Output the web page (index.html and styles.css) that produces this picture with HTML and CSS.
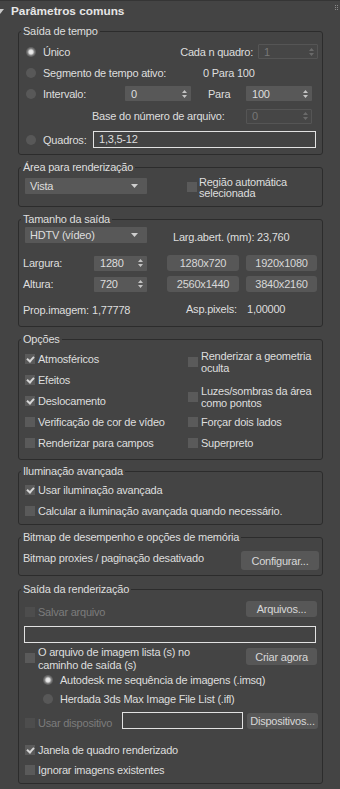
FILE: index.html
```html
<!DOCTYPE html>
<html lang="pt">
<head>
<meta charset="utf-8">
<title>Parâmetros comuns</title>
<link rel="stylesheet" href="styles.css">
</head>
<body>
<div class="panel">
  <div class="head">
    <svg class="tri" width="8" height="5" viewBox="0 0 8 5"><path d="M0 0H8L4 5Z"/></svg>
    <span class="title">Parâmetros comuns</span>
    <svg class="grip" width="4" height="7" viewBox="0 0 4 7"><rect x="0" y="0" width="1" height="1"/><rect x="2" y="0" width="1" height="1"/><rect x="0" y="2" width="1" height="1"/><rect x="2" y="2" width="1" height="1"/><rect x="0" y="4" width="1" height="1"/><rect x="2" y="4" width="1" height="1"/></svg>
  </div>

  <section class="group g1">
    <div class="legend">Saída de tempo</div>
    <div class="row t1">
      <span class="radio on"></span><span class="rtext">Único</span>
      <span class="cada">Cada n quadro:</span>
      <span class="spin dis w60"><span>1</span><svg class="ud" width="5" height="8" viewBox="0 0 5 8"><path d="M2.5 0L5 3H0Z M2.5 8L5 5H0Z"/></svg></span>
    </div>
    <div class="row t2">
      <span class="radio"></span><span class="rtext seg">Segmento de tempo ativo:</span>
      <span>0 Para 100</span>
    </div>
    <div class="row t3">
      <span class="radio"></span><span class="rtext intv">Intervalo:</span>
      <span class="spin w66"><span>0</span><svg class="ud" width="5" height="8" viewBox="0 0 5 8"><path d="M2.5 0L5 3H0Z M2.5 8L5 5H0Z"/></svg></span>
      <span class="para">Para</span>
      <span class="spin w66"><span>100</span><svg class="ud" width="5" height="8" viewBox="0 0 5 8"><path d="M2.5 0L5 3H0Z M2.5 8L5 5H0Z"/></svg></span>
    </div>
    <div class="row t4">
      <span class="base">Base do número de arquivo:</span>
      <span class="spin dis w66"><span>0</span><svg class="ud" width="5" height="8" viewBox="0 0 5 8"><path d="M2.5 0L5 3H0Z M2.5 8L5 5H0Z"/></svg></span>
    </div>
    <div class="row t5">
      <span class="radio"></span><span class="rtext quad">Quadros:</span>
      <span class="field w223">1,3,5-12</span>
    </div>
  </section>

  <section class="group g2">
    <div class="legend">Área para renderização</div>
    <div class="row top a1">
      <span class="drop"><span>Vista</span><svg class="dd" width="7" height="4" viewBox="0 0 7 4"><path d="M0 0H7L3.5 4Z"/></svg></span>
      <span class="cbox auto"></span>
      <span class="two">Região automática<br>selecionada</span>
    </div>
  </section>

  <section class="group g3">
    <div class="legend">Tamanho da saída</div>
    <div class="row top s1">
      <span class="drop"><span>HDTV (vídeo)</span><svg class="dd" width="7" height="4" viewBox="0 0 7 4"><path d="M0 0H7L3.5 4Z"/></svg></span>
      <span class="larg">Larg.abert. (mm): 23,760</span>
    </div>
    <div class="row s2">
      <span class="dim">Largura:</span>
      <span class="spin w53"><span>1280</span><svg class="ud" width="5" height="8" viewBox="0 0 5 8"><path d="M2.5 0L5 3H0Z M2.5 8L5 5H0Z"/></svg></span>
      <span class="btn b1">1280x720</span>
      <span class="btn b2">1920x1080</span>
    </div>
    <div class="row s3">
      <span class="dim">Altura:</span>
      <span class="spin w53"><span>720</span><svg class="ud" width="5" height="8" viewBox="0 0 5 8"><path d="M2.5 0L5 3H0Z M2.5 8L5 5H0Z"/></svg></span>
      <span class="btn b1">2560x1440</span>
      <span class="btn b2">3840x2160</span>
    </div>
    <div class="row s4">
      <span class="prop">Prop.imagem:</span>
      <span class="propv">1,77778</span>
      <span class="asp">Asp.pixels:</span>
      <span class="aspv">1,00000</span>
    </div>
  </section>

  <section class="group g4">
    <div class="legend">Opções</div>
    <div class="cols">
      <div class="col left">
        <label class="chk"><span class="cbox on"></span><span>Atmosféricos</span></label>
        <label class="chk"><span class="cbox on"></span><span>Efeitos</span></label>
        <label class="chk"><span class="cbox on"></span><span>Deslocamento</span></label>
        <label class="chk"><span class="cbox"></span><span>Verificação de cor de vídeo</span></label>
        <label class="chk"><span class="cbox"></span><span>Renderizar para campos</span></label>
      </div>
      <div class="col right">
        <label class="chk o1"><span class="cbox"></span><span class="ml">Renderizar a geometria<br>oculta</span></label>
        <label class="chk o2"><span class="cbox"></span><span class="ml">Luzes/sombras da área<br>como pontos</span></label>
        <label class="chk o3"><span class="cbox"></span><span>Forçar dois lados</span></label>
        <label class="chk o4"><span class="cbox"></span><span>Superpreto</span></label>
      </div>
    </div>
  </section>

  <section class="group g5">
    <div class="legend">Iluminação avançada</div>
    <div class="col list">
      <label class="chk"><span class="cbox on"></span><span>Usar iluminação avançada</span></label>
      <label class="chk"><span class="cbox"></span><span>Calcular a iluminação avançada quando necessário.</span></label>
    </div>
  </section>

  <section class="group g6">
    <div class="legend">Bitmap de desempenho e opções de memória</div>
    <div class="row top m1">
      <span class="proxy">Bitmap proxies / paginação desativado</span>
      <span class="btn cfg">Configurar...</span>
    </div>
  </section>

  <section class="group g7">
    <div class="legend">Saída da renderização</div>
    <div class="row top o-r1">
      <span class="cbox dis"></span>
      <span class="ctext dim-t">Salvar arquivo</span>
      <span class="btn arq">Arquivos...</span>
    </div>
    <div class="field path"></div>
    <div class="row top o-r3">
      <span class="cbox lst"></span>
      <span class="ctext tall">O arquivo de imagem lista (s) no<br>caminho de saída (s)</span>
      <span class="btn criar">Criar agora</span>
    </div>
    <div class="row sub s-a">
      <span class="radio on"></span><span class="rtext">Autodesk me sequência de imagens (.imsq)</span>
    </div>
    <div class="row sub s-b">
      <span class="radio"></span><span class="rtext">Herdada 3ds Max Image File List (.ifl)</span>
    </div>
    <div class="row top o-r6">
      <span class="cbox dis"></span>
      <span class="ctext dim-t dev">Usar dispositivo</span>
      <span class="field devf"></span>
      <span class="btn disp">Dispositivos...</span>
    </div>
    <label class="chk o-r7"><span class="cbox on"></span><span>Janela de quadro renderizado</span></label>
    <label class="chk o-r8"><span class="cbox"></span><span>Ignorar imagens existentes</span></label>
  </section>
</div>
</body>
</html>
```

FILE: styles.css
```css
* { box-sizing: border-box; }
html, body { margin: 0; padding: 0; background: #444444; }
body {
  width: 340px;
  height: 789px;
  overflow: hidden;
  font-family: "Liberation Sans", Arial, sans-serif;
  font-size: 11px;
  line-height: 12px;
  letter-spacing: -0.22px;
  color: #dedede;
}
.panel { border-top: 1px solid #353535; }

/* header */
.head { display: flex; align-items: center; height: 20px; }
.tri { fill: #c8c8c8; margin-left: -4px; margin-right: 7px; }
.title { font-weight: bold; font-size: 11.8px; letter-spacing: 0; color: #e6e6e6; }
.grip { fill: #8a8a8a; margin-left: auto; margin-right: 1px; margin-top: -6px; }

/* group boxes */
.group {
  margin: 0 0 12px 18px;
  width: 305px;
  border: 1px solid #2c2c2c;
  border-radius: 3px;
}
.g1 { margin-top: 10px; height: 124px; }
.g2 { height: 40px; }
.g3 { height: 108px; }
.g4 { height: 121px; margin-bottom: 11px; }
.g5 { height: 54px; }
.g6 { height: 39px; margin-bottom: 13px; }
.g7 { height: 195px; }
.legend {
  display: table;
  margin: -7px 0 0 2px;
  padding: 0 2px;
  height: 12px;
  line-height: 12px;
  background: #444444;
  white-space: nowrap;
}

/* rows */
.row { display: flex; align-items: center; white-space: nowrap; }
.row.top { align-items: flex-start; }

/* controls */
.radio {
  flex: none;
  width: 10px; height: 10px;
  border-radius: 50%;
  background: #585858;
  margin-left: 7px;
}
.radio.on {
  background: radial-gradient(circle, #f0f0f0 0, #e0e0e0 2px, #9a9a9a 3px, #6a6a6a 4px, #5e5e5e 5px);
}
.rtext { margin-left: 7px; }
.cbox {
  flex: none;
  width: 10px; height: 10px;
  background: #5a5a5a;
}
.cbox.on::after {
  content: "";
  display: block;
  width: 5px; height: 3px;
  margin: 2px 0 0 2px;
  border-left: 2px solid #d6d6d6;
  border-bottom: 2px solid #d6d6d6;
  transform: rotate(-48deg);
}
.cbox.dis { background: #4d4d4d; }
.spin {
  flex: none;
  display: flex;
  align-items: center;
  justify-content: space-between;
  height: 15px;
  padding: 0 4px 0 6px;
  background: #585858;
  border-radius: 1px;
}
.spin .ud { fill: #c4c4c4; }
.spin.dis { background: #464646; border: 1px solid #555555; color: #777777; padding-left: 5px; padding-right: 3px; }
.spin.dis .ud { fill: #6a6a6a; }
.w60 { width: 60px; }
.w66 { width: 66px; }
.w53 { width: 53px; }
.field {
  flex: none;
  height: 17px;
  border: 1px solid #e2e2e2;
  background: #434343;
  padding: 2px 5px;
  line-height: 11px;
}
.w223 { width: 223px; }
.drop {
  flex: none;
  display: flex;
  align-items: center;
  justify-content: space-between;
  width: 122px; height: 16px;
  margin-left: 6px;
  padding: 0 9px 0 5px;
  background: #585858;
  border-radius: 1px;
}
.drop .dd { fill: #cfcfcf; }
.btn {
  flex: none;
  display: flex;
  align-items: center;
  justify-content: center;
  height: 16px;
  background: #575757;
  border-radius: 3px;
  color: #d8d8d8;
}
.chk { display: flex; align-items: center; white-space: nowrap; height: 12px; }
.chk .cbox + span { margin-left: 3px; }
.ml { line-height: 12px; }

/* group 1 */
.t1 { margin-top: 7px; height: 15px; }
.cada { margin-left: auto; margin-right: 5px; }
.t1 .spin { margin-right: 4px; }
.t2 { margin-top: 6px; height: 15px; }
.seg { width: 160px; }
.t3 { margin-top: 6px; height: 15px; }
.intv { width: 82px; }
.para { margin-left: 17px; width: 38px; }
.t4 { margin-top: 7px; height: 16px; }
.base { margin-left: 73px; width: 154px; }
.t5 { margin-top: 7px; height: 17px; }
.quad { width: 50px; }

/* group 2 */
.a1 { margin-top: 4px; }
.a1 .drop { margin-top: 1px; }
.cbox.auto { margin-left: 40px; margin-top: 5px; }
.two { margin-left: 2px; line-height: 11px; }

/* group 3 */
.s1 { margin-top: 2px; }
.larg { margin-left: 26px; margin-top: 4px; }
.s2 { margin-top: 12px; height: 16px; }
.s3 { margin-top: 5px; height: 16px; }
.dim { margin-left: 4px; width: 71px; }
.b1 { margin-left: 20px; width: 72px; }
.b2 { margin-left: 7px; width: 71px; }
.s4 { margin-top: 12px; height: 12px; }
.prop { margin-left: 4px; width: 69px; }
.propv { width: 94px; }
.asp { width: 61px; margin-top: -2px; }
.aspv { margin-top: -3px; }

/* group 4 */
.cols { display: flex; margin-top: 5px; }
.col { display: flex; flex-direction: column; }
.col.left { margin-left: 6px; width: 163px; padding-top: 3px; gap: 9px; }
.o1, .o2 { height: 24px; }
.o2 { margin-top: 11px; }
.o3 { margin-top: 7px; }
.o4 { margin-top: 9px; }

/* group 5 */
.list { margin-top: 7px; margin-left: 6px; gap: 9px; }

/* group 6 */
.m1 { margin-top: 8px; }
.proxy { margin-left: 4px; margin-top: 1px; }
.cfg { margin-left: auto; margin-right: 3px; width: 78px; height: 19px; }

/* group 7 */
.o-r1 { margin-top: 6px; height: 16px; }
.o-r1 .cbox { margin-left: 6px; margin-top: 6px; }
.ctext { margin-left: 3px; margin-top: 5px; }
.dim-t { color: #7c7c7c; }
.arq { margin-left: auto; margin-right: 5px; width: 71px; }
.field.path { margin: 9px 0 0 5px; width: 292px; }
.o-r3 { margin-top: 3px; }
.o-r3 .cbox { margin-left: 6px; margin-top: 7px; }
.ctext.tall { margin-top: 0; line-height: 13px; }
.criar { margin-left: auto; margin-right: 5px; margin-top: 2px; width: 71px; height: 17px; }
.sub { height: 12px; }
.sub .radio { margin-left: 24px; }
.s-a { margin-top: 2px; }
.s-b { margin-top: 7px; }
.o-r6 { margin-top: 7px; height: 17px; }
.o-r6 .cbox { margin-left: 6px; margin-top: 6px; }
.dev { width: 84px; }
.field.devf { width: 121px; }
.disp { margin-left: 4px; margin-top: 1px; width: 71px; }
.o-r7 { margin-top: 15px; margin-left: 6px; }
.o-r8 { margin-top: 8px; margin-left: 6px; }
```
